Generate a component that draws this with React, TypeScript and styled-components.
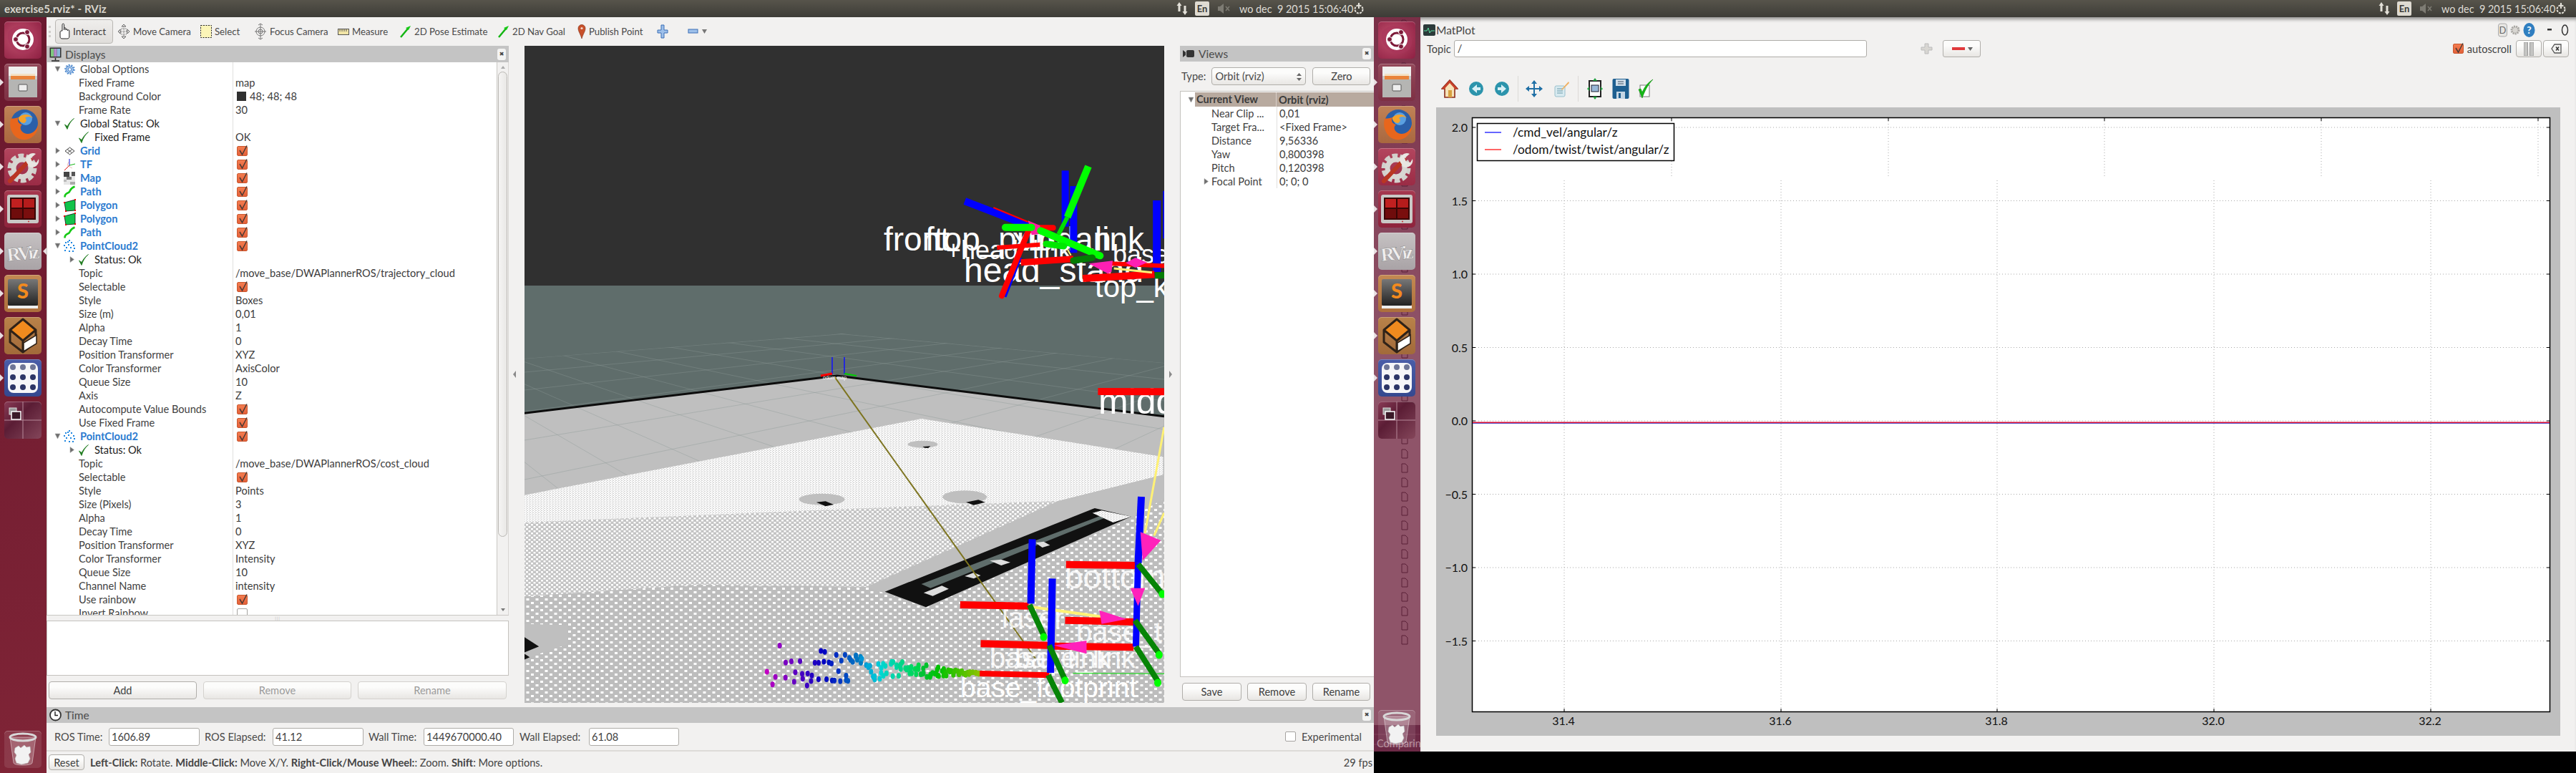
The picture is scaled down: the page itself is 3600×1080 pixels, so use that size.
import React from "react";
import styled, { createGlobalStyle } from "styled-components";

const FONT = `Lato, "Noto Sans", "Liberation Sans", sans-serif`;

const Global = createGlobalStyle`
  html, body { margin: 0; padding: 0; background: #000; }
  body { width: 3600px; height: 1080px; overflow: hidden; font-family: ${FONT}; font-size: 14.6px; color: #3c3c3c; }
  * { box-sizing: border-box; }
  svg { flex: none; }
`;

const Desktop = styled.div`display: flex; width: 3600px; height: 1080px; background: #000;`;
const Monitor = styled.div<{ $w: number; $h: number }>`
  width: ${p => p.$w}px; height: ${p => p.$h}px; display: flex; flex-direction: column; flex: none;
`;
const TopBar = styled.div`
  height: 24px; flex: none; display: flex; align-items: center; padding: 0 6px;
  background: linear-gradient(#57544b, #3d3c37);
`;
const WinTitle = styled.div`font-weight: 700; font-size: 15px; color: #d9d6cd; letter-spacing: .1px;`;
const Tray = styled.div`margin-left: auto; display: flex; align-items: center; height: 24px; color: #e0ddd5; padding-right: 6px;`;
const Clock = styled.div`width: 158px; margin-left: 13px; font-size: 14.4px; white-space: pre; color: #dfdcd4;`;
const EnBadge = styled.div`
  width: 20px; height: 20px; margin-left: 9px; background: #dfdbd2; color: #3c3b37; border-radius: 2px;
  font-size: 13px; font-weight: 700; text-align: center; line-height: 20px;
`;
const TrayIcon = styled.svg<{ $ml?: number }>`display: block; margin-left: ${p => p.$ml ?? 0}px;`;
const MonitorBody = styled.div`flex: 1; display: flex; min-height: 0;`;

const Launcher = styled.div<{ $dim?: boolean }>`
  position: relative; width: 65px; flex: none; padding: 6px 0 0 6px; overflow: hidden;
  background: ${p => p.$dim ? "linear-gradient(#7a2f47, #8f5469 45%, #8f5469)" : "linear-gradient(#6a182e, #7f2436)"};
  display: flex; flex-direction: column; gap: 7px;
`;
const Tile = styled.div<{ $bg: string }>`
  position: relative; z-index: 1; width: 52px; height: 52px; flex: none; border-radius: 5px; background: ${p => p.$bg};
  box-shadow: inset 0 1px 0 rgba(255,255,255,.25);
`;
const TileSvg = styled.svg`display: block;`;
const TrashSlot = styled.div<{ $b: number }>`position: absolute; z-index: 1; left: 6px; bottom: ${p => p.$b}px;`;
const Pip = styled.i`
  position: absolute; left: -6px; top: 21px; width: 0; height: 0;
  border: 5px solid transparent; border-left: 5px solid #e8dfe2; border-right: 0;
`;
const PipRight = styled.i`
  position: absolute; right: -7px; top: 21px; width: 0; height: 0;
  border: 5px solid transparent; border-right: 5px solid #e8dfe2; border-left: 0;
`;
const GhostTree = styled.div`position: absolute; left: 38px; top: 0; display: flex; flex-direction: column;`;
const GhostRow = styled.div`height: 20px; display: flex; align-items: center;`;
const GhostBand = styled.div`
  position: absolute; left: 0; right: 0; bottom: 0; height: 37px; background: repeating-linear-gradient(#6c2a46 0 12px, #76344f 12px 14px);
  color: #b48a9a; font-size: 14.5px; line-height: 52px; padding-left: 4px; white-space: nowrap;
`;

const Window = styled.div`flex: 1; min-width: 0; background: #f2f1f0; display: flex; flex-direction: column;`;
const Toolbar = styled.div`height: 40px; flex: none; display: flex; align-items: center; padding-left: 3px;`;
const Grip = styled.div`width: 9px; height: 16px; border-left: 3px dotted #cfcdc9; flex: none;`;
const ToolActive = styled.div<{ $w: number }>`
  width: ${p => p.$w}px; height: 34px; flex: none; display: flex; align-items: center; gap: 3px; padding-left: 4px;
  background: linear-gradient(#efeeec, #e0dedb); border: 1px solid #b9b7b3; border-radius: 4px; margin-right: 6px; font-size: 13.6px;
`;
const ToolItem = styled.div<{ $w: number; $ml?: number }>`
  width: ${p => p.$w}px; margin-left: ${p => p.$ml ?? 0}px; flex: none; display: flex; align-items: center; gap: 4px;
  white-space: nowrap; color: #4a4a4a; font-size: 13.2px; height: 34px;
`;

const MainRow = styled.div`height: 924px; flex: none; display: flex;`;
const DisplaysDock = styled.div`width: 646px; flex: none; display: flex; flex-direction: column;`;
const DockHeader = styled.div<{ $h: number }>`
  height: ${p => p.$h}px; flex: none; background: #c4c4c4; display: flex; align-items: center; gap: 5px; padding: 0 4px;
  font-size: 15.5px; color: #4b4b4b;
`;
const CloseBox = styled.div`
  margin-left: auto; width: 12px; height: 16px; background: #f4f4f3; border-radius: 3px;
  font-size: 8px; line-height: 16px; text-align: center; color: #444; font-family: "DejaVu Sans", sans-serif;
`;
const TreeFrame = styled.div`height: 773px; flex: none; display: flex; background: #fff; border-left: 1px solid #c9c7c3; border-bottom: 1px solid #c9c7c3; overflow: hidden;`;
const TreeBody = styled.div`flex: 1; min-width: 0; overflow: hidden; height: 772px;`;
const Row = styled.div`height: 19px; display: flex;`;
const NameCell = styled.div<{ $ind: number; $w: number }>`
  width: ${p => p.$w}px; flex: none; padding-left: ${p => p.$ind}px; display: flex; align-items: center;
  border-right: 1px solid #e1e0de; white-space: nowrap; overflow: hidden;
`;
const ValueCell = styled.div<{ $pad: number }>`
  flex: 1; padding-left: ${p => p.$pad}px; display: flex; align-items: center; gap: 5px; white-space: nowrap; color: #3c3c3c;
`;
const Expander = styled.span`width: 14px; flex: none; display: flex; align-items: center; justify-content: flex-start; padding-left: 2px;`;
const HeadExpander = styled(Expander)`width: 12px; margin-left: 8px;`;
const RowIcon = styled.span`width: 18px; margin-right: 6px; flex: none; display: flex; align-items: center; justify-content: center;`;
const Label = styled.span<{ $kind?: string }>`
  color: ${p => p.$kind === "link" ? "#2b7bd0" : p.$kind === "status" ? "#1c1c1c" : "#3f3f3f"};
  font-weight: ${p => p.$kind === "link" ? 700 : 400};
`;
const Swatch = styled.span`width: 13px; height: 13px; background: #303030; flex: none; margin-left: 2px;`;
const Check = styled.span<{ $off?: boolean }>`
  position: relative; display: block; width: 15px; height: 14px; margin-left: 2px; border-radius: 2px; flex: none;
  background: ${p => p.$off ? "#fff" : "linear-gradient(#f47c4f, #e4613a)"};
  border: 1px solid ${p => p.$off ? "#a5a3a0" : "#c9582f"};
`;
const CheckMark = styled.svg`position: absolute; left: 0; top: -3px;`;
const ScrollBar = styled.div`
  width: 17px; flex: none; position: relative; background: #f2f1f0; border-left: 1px solid #c9c7c3; border-right: 1px solid #d8d6d3;
`;
const ScrollThumb = styled.div`
  position: absolute; left: 1px; right: 1px; top: 13px; height: 650px; background: linear-gradient(90deg, #f5f4f3, #e9e8e6);
  border: 1px solid #b9b7b3; border-radius: 7px;
`;
const ScrollArrow = styled.i<{ $up?: boolean }>`
  position: absolute; left: 5px; ${p => p.$up ? "top: 5px; border-bottom: 4px solid #aaa;" : "bottom: 5px; border-top: 4px solid #777;"}
  border-left: 3px solid transparent; border-right: 3px solid transparent; width: 0; height: 0;
`;
const HSplit = styled.div`height: 7px; flex: none; display: flex; align-items: center; justify-content: center; color: #bbb; font-size: 6px; letter-spacing: 1px;`;
const DescBox = styled.div`height: 77px; flex: none; background: #fff; border: 1px solid #c4c2be;`;
const ButtonRow = styled.div<{ $gap: number; $pl: number }>`
  display: flex; gap: ${p => p.$gap}px; padding: 8px 0 0 ${p => p.$pl}px; flex: none;
`;
const Btn = styled.div<{ $w: number; $off?: boolean; $h?: number; $ml?: number }>`
  width: ${p => p.$w}px; height: ${p => p.$h ?? 25}px; flex: none; display: flex; align-items: center; justify-content: center;
  margin-left: ${p => p.$ml ?? 0}px;
  background: linear-gradient(#fcfcfb 30%, #e8e6e3); border: 1px solid ${p => p.$off ? "#d4d2ce" : "#b0aeaa"}; border-radius: 4px;
  color: ${p => p.$off ? "#9b9b9b" : "#3f3f3f"};
`;
const VSplit = styled.div<{ $left?: boolean }>`
  width: 22px; flex: none; display: flex; align-items: center; justify-content: ${p => p.$left ? "center" : "flex-start"};
  height: 918px; padding-left: ${p => p.$left ? 0 : 7}px; padding-right: ${p => p.$left ? 6 : 0}px;
`;
const SplitArrow = styled.i<{ $dir: string }>`
  width: 0; height: 0; border-top: 5px solid transparent; border-bottom: 5px solid transparent;
  ${p => p.$dir === "l" ? "border-right: 4px solid #8a8a8a;" : "border-left: 4px solid #8a8a8a;"}
`;
const Viewport = styled.svg`display: block; width: 894px; height: 918px; flex: none;`;
const ViewsDock = styled.div`width: 271px; flex: none; display: flex; flex-direction: column;`;
const TypeRow = styled.div`height: 41px; flex: none; display: flex; align-items: center; padding: 0 4px 0 2px; color: #4a4a4a;`;
const Combo = styled.div`
  width: 132px; height: 25px; margin-left: 8px; border: 1px solid #b0aeaa; border-radius: 4px; background: linear-gradient(#fcfcfb 30%, #e8e6e3);
  display: flex; align-items: center; padding-left: 4px; position: relative; flex: none; color: #4a4a4a;
`;
const ComboArrows = styled.svg`position: absolute; right: 5px; top: 6px;`;
const ViewsTree = styled.div`height: 819px; flex: none; background: #fff; border: 1px solid #c4c2be; border-right: 0; overflow: hidden; padding-top: 1px;`;
const ViewHead = styled.div`height: 20px; display: flex; align-items: center;`;
const HeadCells = styled.div`flex: 1; display: flex; height: 20px; background: #b8aa9f; align-items: center; font-weight: 700; color: #3a3a3a;`;
const HeadName = styled.div`width: 114px; padding-left: 2px; border-right: 1px solid #d8cfc8; height: 20px; line-height: 20px;`;
const HeadValue = styled.div`padding-left: 3px;`;

const TimeDock = styled.div`flex: none; height: 92px; display: flex; flex-direction: column;`;
const TimeRow = styled.div`height: 40px; flex: none; display: flex; align-items: center; padding-left: 11px; border-bottom: 2px solid #dddbd8;`;
const TimeLabel = styled.div<{ $w: number }>`width: ${p => p.$w}px; flex: none; color: #4a4a4a; white-space: nowrap;`;
const TimeInput = styled.div<{ $w?: number; $mr?: number }>`
  width: ${p => p.$w ?? 127}px; height: 25px; flex: none; margin-right: ${p => p.$mr ?? 7}px; background: #fff; border: 1px solid #aeaca8; border-radius: 3px;
  padding-left: 3px; line-height: 23px; color: #3f3f3f;
`;
const Experimental = styled.div`margin-left: auto; display: flex; align-items: center; gap: 8px; padding-right: 17px; color: #4a4a4a;`;
const StatusRow = styled.div`flex: 1; display: flex; align-items: center; padding-left: 3px; color: #444;`;
const StatusText = styled.div`margin-left: 8px; white-space: nowrap;`;
const Fps = styled.div`margin-left: auto; padding-right: 2px; color: #444;`;

/* Right monitor */
const PlotWindow = styled(Window)`box-shadow: inset 0 6px 5px -3px rgba(0,0,0,.4);`;
const PlotTitleRow = styled.div`height: 28px; margin-top: 4px; flex: none; display: flex; align-items: center; padding: 0 10px 0 4px; font-size: 15.5px; color: #444;`;
const TitleIcon = styled.svg`margin-right: 1px;`;
const WinControls = styled.div`margin-left: auto; display: flex; align-items: center; gap: 3px;`;
const MinimizeMark = styled.svg`margin-left: 4px;`;
const TopicRow = styled.div`height: 24px; flex: none; display: flex; align-items: center; padding: 0 8px 0 9px; color: #444;`;
const TopicInput = styled.div`
  width: 577px; height: 24px; margin-left: 4px; flex: none; background: #fff; border: 1px solid #aeaca8; border-radius: 3px; padding-left: 4px; line-height: 22px;
`;
const AddTopic = styled.svg`margin-left: 72px;`;
const DropBtn = styled.div`
  width: 53px; height: 24px; margin-left: 10px; flex: none; border: 1px solid #b0aeaa; border-radius: 3px; background: linear-gradient(#fcfcfb 30%, #e8e6e3);
  display: flex; align-items: center; gap: 4px; padding-left: 12px;
`;
const AutoLabel = styled.div`display: flex; align-items: center; gap: 5px; margin-left: auto; margin-right: 6px;`;
const SquareBtn = styled.div`
  width: 36px; height: 24px; flex: none; margin-right: 2px; display: flex; align-items: center; justify-content: center;
  border: 1px solid #b0aeaa; border-radius: 4px; background: linear-gradient(#fcfcfb 30%, #e8e6e3);
`;
const PlotTools = styled.div`height: 50px; margin-top: 19px; flex: none; padding-left: 26px; display: flex; align-items: center;`;
const PlotToolSlot = styled.div<{ $w: number; $ml?: number }>`width: ${p => p.$w}px; margin-left: ${p => p.$ml ?? 0}px; flex: none; display: flex; justify-content: center;`;
const ToolSep = styled.div<{ $ml: number }>`width: 1px; height: 36px; margin-left: ${p => p.$ml}px; background: #dcdad7; flex: none;`;
const FigureWrap = styled.div`padding-left: 22px; padding-top: 1px; flex: none;`;
const Figure = styled.svg`display: block; width: 1571px; height: 878px;`;

/* helpers */
const z5 = (x: number, y: number): [number, number] => [720 + x / 1.568, 500 + y / 3];
const z11 = (x: number, y: number): [number, number] => [1220 + x / 3, 220 + y / 3];
type Z = typeof z5;
const poly = (f: Z, pts: number[][]) => pts.map(p => f(p[0], p[1]).map(n => n.toFixed(1)).join(",")).join(" ");

const Bar = ({ f, a, c, w, cap }: { f: Z; a: number[]; c: string; w: number; cap?: "round" | "butt" }) => {
  const [x1, y1] = f(a[0], a[1]);
  const [x2, y2] = f(a[2], a[3]);
  return <line x1={x1} y1={y1} x2={x2} y2={y2} stroke={c} strokeWidth={w} strokeLinecap={cap ?? "butt"} />;
};

const Tri = ({ open }: { open?: boolean }) => open
  ? <svg width="9" height="9" viewBox="0 0 9 9"><path d="M1 1h7L4.500 8z" fill="#6e6e6e" stroke="#a8a8a8" strokeWidth=".6" /></svg>
  : <svg width="9" height="9" viewBox="0 0 9 9"><path d="M2 .5v8L7.500 4.500z" fill="#6e6e6e" stroke="#a8a8a8" strokeWidth=".6" /></svg>;

const CheckBox = ({ off }: { off?: boolean }) => (
  <Check $off={off}>
    {!off && <CheckMark width="15" height="17" viewBox="0 0 15 17"><path d="M3 8l3.500 6L13 1.500" fill="none" stroke="#4a3a34" strokeWidth="1.5" /></CheckMark>}
  </Check>
);

const GreenCheck = () => <svg width="16" height="18" viewBox="0 0 16 18"><path d="M1.500 10L5 16.500C7 10 10 5 14.500 1.500 9.500 5 7 9 5.200 12.500z" fill="#1d7a1d" stroke="#1d7a1d" strokeWidth=".8" /></svg>;

const DisplayIcon = ({ kind }: { kind: string }) => {
  switch (kind) {
    case "gear": return <svg width="15" height="16" viewBox="0 0 16 16"><circle cx="8" cy="8" r="5.500" fill="#a9c6ea" stroke="#3a7cc8" strokeWidth="1.500" strokeDasharray="2 1" /><circle cx="8" cy="8" r="2.500" fill="#fff" stroke="#3a7cc8" /><circle cx="8" cy="8" r="7" fill="none" stroke="#3a7cc8" strokeWidth="1.500" strokeDasharray="2 2.400" /></svg>;
    case "check": return <GreenCheck />;
    case "grid": return <svg width="15" height="12" viewBox="0 0 15 12"><path d="M7.500 1L14 6l-6.500 5L1 6zM4 3.500l6.500 5M11 3.500L4.500 8.500" fill="none" stroke="#444" strokeWidth="1" /></svg>;
    case "tf": return <svg width="17" height="18" viewBox="0 0 17 18"><path d="M8 10V1" stroke="#1616d8" strokeWidth="1" /><path d="M8 10l8-2" stroke="#14b414" strokeWidth="1" /><path d="M8 10l-7 7" stroke="#e01010" strokeWidth="1" /><path d="M7 5l-2 5 7 4" fill="none" stroke="#e8a8a8" strokeWidth=".8" /></svg>;
    case "map": return <svg width="16" height="18" viewBox="0 0 16 18"><rect width="16" height="18" fill="#e6e6e6" /><rect width="8" height="7" fill="#444" /><rect x="11" width="5" height="6" fill="#555" /><rect y="7" x="4" width="7" height="4" fill="#777" /><rect y="11" width="4" height="3" fill="#bbb" /><rect x="9" y="14" width="7" height="4" fill="#aaa" /></svg>;
    case "path": return <svg width="17" height="18" viewBox="0 0 17 18"><path d="M1.500 16.500c0-6 4-5 6-7s1-5 8-8" fill="none" stroke="#16c916" strokeWidth="2.600" /></svg>;
    case "poly": return <svg width="17" height="18" viewBox="0 0 17 18"><path d="M1 5l15-4 0 15-13 1z" fill="#12c34a" stroke="#111" strokeWidth=".8" /><rect x="0" y="4" width="2" height="2" fill="#e00" /><rect x="15" y="0" width="2" height="2" fill="#e00" /><rect x="15" y="15" width="2" height="2" fill="#e00" /><rect x="2" y="16" width="2" height="2" fill="#e00" /></svg>;
    case "cloud": return <svg width="16" height="18" viewBox="0 0 16 18" fill="#1f86e0">{[[7, 0], [2, 3], [10, 3], [0, 7], [6, 6], [13, 7], [3, 10], [9, 10], [14, 11], [1, 14], [7, 15], [12, 15], [5, 2]].map((p, i) => <rect key={i} x={p[0]} y={p[1]} width="2" height="2" />)}</svg>;
    default: return null;
  }
};

type Item = { n: string; v?: string; o?: boolean; e?: boolean; i?: string; k?: string; ck?: boolean; lvl?: number; sw?: boolean; off?: boolean };
const P = (n: string, v?: string): Item => ({ n, v });
const C = (n: string): Item => ({ n, ck: true });
const D = (n: string, i: string, o = false): Item => ({ n, i, e: true, o, k: "link", ck: true, lvl: 0 });
const pc1: Item[] = [
  P("Topic", "/move_base/DWAPlannerROS/trajectory_cloud"), C("Selectable"), P("Style", "Boxes"), P("Size (m)", "0,01"), P("Alpha", "1"),
  P("Decay Time", "0"), P("Position Transformer", "XYZ"), P("Color Transformer", "AxisColor"), P("Queue Size", "10"), P("Axis", "Z"),
  C("Autocompute Value Bounds"), C("Use Fixed Frame"),
];
const pc2: Item[] = [
  P("Topic", "/move_base/DWAPlannerROS/cost_cloud"), C("Selectable"), P("Style", "Points"), P("Size (Pixels)", "3"), P("Alpha", "1"),
  P("Decay Time", "0"), P("Position Transformer", "XYZ"), P("Color Transformer", "Intensity"), P("Queue Size", "10"), P("Channel Name", "intensity"),
  C("Use rainbow"), { n: "Invert Rainbow", ck: true, off: true },
];
const status: Item = { n: "Status: Ok", i: "check", e: true, k: "status", lvl: 1 };
const items: Item[] = [
  { n: "Global Options", i: "gear", e: true, o: true, lvl: 0 },
  P("Fixed Frame", "map"), { n: "Background Color", v: "48; 48; 48", sw: true }, P("Frame Rate", "30"),
  { n: "Global Status: Ok", i: "check", e: true, o: true, k: "status", lvl: 0 },
  { n: "Fixed Frame", v: "OK", i: "check", k: "status", lvl: 1 },
  D("Grid", "grid"), D("TF", "tf"), D("Map", "map"), D("Path", "path"), D("Polygon", "poly"), D("Polygon", "poly"), D("Path", "path"),
  D("PointCloud2", "cloud", true), status, ...pc1, D("PointCloud2", "cloud", true), status, ...pc2,
];

const DisplayRow = ({ it }: { it: Item }) => {
  const ind = it.lvl === 0 ? 8 : it.lvl === 1 ? 28 : 44;
  return (
    <Row>
      <NameCell $w={260} $ind={ind}>
        {it.lvl !== undefined && <Expander>{it.e && <Tri open={it.o} />}</Expander>}
        {it.i && <RowIcon><DisplayIcon kind={it.i} /></RowIcon>}
        <Label $kind={it.k}>{it.n}</Label>
      </NameCell>
      <ValueCell $pad={3}>
        {it.ck && <CheckBox off={it.off} />}
        {it.sw && <Swatch />}
        {it.v}
      </ValueCell>
    </Row>
  );
};

const viewRows: [string, string, boolean?][] = [
  ["Near Clip ...", "0,01"], ["Target Fra...", "<Fixed Frame>"], ["Distance", "9,56336"], ["Yaw", "0,800398"], ["Pitch", "0,120398"], ["Focal Point", "0; 0; 0", true],
];

/* Launcher tile art */
const tileBg: Record<string, string> = {
  ubuntu: "radial-gradient(circle at 40% 45%, #c4526f, #8d1f42)",
  files: "linear-gradient(#93495a, #7e3044)",
  firefox: "linear-gradient(#c08256, #a9683f)",
  settings: "linear-gradient(#b3455e, #9a2b45)",
  term: "linear-gradient(#a6384f, #8e233c)",
  rviz: "linear-gradient(#c6c2c3, #a9a3a6)",
  sublime: "linear-gradient(#c48a52, #ad6f3c)",
  box: "linear-gradient(#b98249, #a26a3a)",
  apps: "linear-gradient(#4a5da8, #34488f)",
  work: "linear-gradient(135deg, #8a3b56, #5b1d35 40%, #84465a)",
  trash: "rgba(255,255,255,.1)",
};

const TileArt = ({ kind }: { kind: string }) => {
  const S = (c: React.ReactNode) => <TileSvg width="52" height="52" viewBox="0 0 52 52">{c}</TileSvg>;
  switch (kind) {
    case "ubuntu": return S(<>
      <path d="M6 14C18 0 44 4 47 26 49 42 30 50 18 42 8 36 2 24 6 14z" fill="#a8355a" opacity=".6" />
      <circle cx="26" cy="25" r="15" fill="#fff" /><circle cx="26" cy="25" r="9" fill="none" stroke="#7d1a39" strokeWidth="3" />
      <circle cx="32" cy="15" r="3.500" fill="#7d1a39" stroke="#fff" /><circle cx="32" cy="35" r="3.500" fill="#7d1a39" stroke="#fff" /><circle cx="16" cy="25" r="3.500" fill="#7d1a39" stroke="#fff" />
    </>);
    case "files": return S(<>
      <rect x="6" y="4" width="40" height="43" rx="2" fill="#c9c9c7" /><rect x="6" y="4" width="40" height="13" fill="#efefed" />
      <rect x="9" y="14" width="34" height="8" fill="#e9843a" /><rect x="9" y="14" width="34" height="3" fill="#f4e1c4" />
      <rect x="6" y="22" width="40" height="25" fill="#b5b5b3" /><rect x="20" y="29" width="12" height="9" rx="1" fill="#eee" stroke="#555" />
    </>);
    case "firefox": return S(<>
      <circle cx="28" cy="24" r="19" fill="#2a5fa8" /><circle cx="30" cy="18" r="9" fill="#5aa0e0" />
      <path d="M9 18C5 34 16 49 30 47c10-1 18-11 17-20-3 10-12 14-19 11-6-3-7-9-3-12-6-1-7-6-5-10C14 18 11 17 9 18z" fill="#e8661c" />
      <path d="M20 16c6-6 16-5 20 1-5-3-9-2-11 0 3 2 2 5-1 7-5 0-9-4-8-8z" fill="#f4a22a" />
    </>);
    case "settings": return S(<>
      <circle cx="25" cy="28" r="16" fill="none" stroke="#d2d0cc" strokeWidth="9" strokeDasharray="7 3" />
      <circle cx="25" cy="28" r="12" fill="none" stroke="#d8d6d2" strokeWidth="7" />
      <path d="M8 46L36 16" stroke="#b93622" strokeWidth="6" strokeLinecap="round" />
      <path d="M30 18c0-8 8-13 14-10l-7 6 2 5 6 1 3-5c2 7-5 14-13 11z" fill="#e8e6e2" />
    </>);
    case "term": return S(<>
      <rect x="4" y="6" width="44" height="40" rx="3" fill="#c9c8c6" /><rect x="8" y="10" width="36" height="31" fill="#3a0505" />
      <rect x="10" y="12" width="15" height="12" fill="#c12020" /><rect x="27" y="12" width="15" height="12" fill="#b51c1c" />
      <rect x="10" y="26" width="15" height="13" fill="#6f0c0c" /><rect x="27" y="26" width="15" height="13" fill="#7a0e0e" />
      <circle cx="34" cy="43.500" r="1" fill="#c33" />
    </>);
    case "rviz": return S(<text x="3" y="38" fontFamily="Liberation Serif, serif" fontSize="27" fontWeight="700" fill="#f0eeee" transform="rotate(-6 26 26)" textLength="46" stroke="#777" strokeWidth=".4">RViz</text>);
    case "sublime": return S(<>
      <defs><linearGradient id="subl" x1="0" y1="0" x2="0" y2="1"><stop offset="0" stopColor="#777" /><stop offset="1" stopColor="#222" /></linearGradient></defs>
      <rect x="5" y="6" width="42" height="37" rx="2" fill="url(#subl)" />
      <rect x="5" y="43" width="42" height="4" fill="#eee" />
      <text x="26" y="33" textAnchor="middle" fontFamily="Lato, sans-serif" fontWeight="900" fontSize="29" fill="#f28a1e">S</text>
    </>);
    case "box": return S(<>
      <path d="M26 3L44 18 26 33 8 18z" fill="#f08a1e" /><path d="M26 3L44 18 26 33 8 18zM8 18v17l18 14 18-14V18M26 33v16" fill="none" stroke="#2f2218" strokeWidth="3" strokeLinejoin="round" />
      <path d="M27 36l18-11v12L27 48z" fill="#fff" stroke="#2f2218" strokeWidth="1.500" />
    </>);
    case "apps": return S(<>
      <rect x="5" y="5" width="42" height="42" rx="8" fill="#f6f6f8" />
      {[12, 26, 40].map(y => [12, 26, 40].map(x => <circle key={x + "-" + y} cx={x} cy={y - 1} r="4" fill={y === 12 ? "#6e7596" : "#2c3566"} />))}
    </>);
    case "work": return S(<>
      <path d="M0 26H52M26 0V52" stroke="#b78a9a" strokeWidth="1" />
      <rect x="7" y="9" width="10" height="9" fill="#999" stroke="#ddd" /><rect x="10" y="14" width="13" height="11" fill="#3a1a28" stroke="#fff" strokeWidth="1.500" />
    </>);
    case "trash": return S(<>
      <path d="M8 9l5 36c1 4 25 4 26 0l5-36z" fill="rgba(255,255,255,.22)" stroke="rgba(255,255,255,.45)" />
      <ellipse cx="26" cy="9" rx="18" ry="5" fill="none" stroke="#d8d8d8" strokeWidth="3" />
      <path d="M15 24l5-3 3 3 5-4 3 3 5-1 1 8-3 3 2 6-3 6-9 2-7-2-2-6 2-5-3-4z" fill="#f2f2f2" stroke="#bbb" strokeWidth=".6" />
    </>);
    default: return null;
  }
};

const tiles: [string, number][] = [["ubuntu", 0], ["files", 1], ["firefox", 1], ["settings", 1], ["term", 1], ["rviz", 2], ["sublime", 1], ["box", 1], ["apps", 1], ["work", 0]];

const LauncherBar = ({ dim, activeRviz }: { dim?: boolean; activeRviz?: boolean }) => (
  <Launcher $dim={dim}>
    {dim && (
      <GhostTree>
        {Array.from({ length: 44 }).map((_, i) => (
          <GhostRow key={i}>
            <svg width="10" height="14" viewBox="0 0 10 14"><path d="M1 1h5l3 3v9H1z" fill="none" stroke="#5a2038" strokeWidth="1" /></svg>
          </GhostRow>
        ))}
      </GhostTree>
    )}
    {tiles.map(([k, pip], i) => (
      <Tile key={i} $bg={tileBg[k]}>
        {pip > 0 && <Pip />}
        {pip === 2 && activeRviz && <PipRight />}
        <TileArt kind={k} />
      </Tile>
    ))}
    {dim && <GhostBand>Comparing</GhostBand>}
    <TrashSlot $b={dim ? 6 : 7}><Tile $bg={tileBg.trash}><TileArt kind="trash" /></Tile></TrashSlot>
  </Launcher>
);

const PanelTray = () => (
  <Tray>
    <TrayIcon width="18" height="20" viewBox="0 0 18 20"><path d="M5 1l3.500 5H6.500v8h-3V6H1.500zM13 19l-3.500-5h2V6h3v8h2z" fill="#e4e1d9" /></TrayIcon>
    <EnBadge>En</EnBadge>
    <TrayIcon $ml={11} width="18" height="16" viewBox="0 0 18 16"><path d="M1 5h3l5-4v14l-5-4H1z" fill="#7d7b73" /><path d="M12 5l5 6M17 5l-5 6" stroke="#7d7b73" strokeWidth="1.500" /></TrayIcon>
    <Clock>wo dec  9 2015 15:06:40</Clock>
    <TrayIcon width="18" height="20" viewBox="0 0 18 20"><circle cx="9" cy="11" r="5.500" fill="none" stroke="#e4e1d9" strokeWidth="2" strokeDasharray="3 1.300" /><path d="M9 2v8" stroke="#e4e1d9" strokeWidth="2" /></TrayIcon>
  </Tray>
);

/* Toolbar icons */
const Ic = {
  hand: <svg width="17" height="24" viewBox="0 0 17 24"><path d="M5 11V2.500a1.300 1.300 0 0 1 2.600 0V10V8a1.200 1.200 0 0 1 2.400 0v2a1.200 1.200 0 0 1 2.400 0v1a1.200 1.200 0 0 1 2.400 0v8c0 2-1 3-3 3H5c-2 0-3-1-3-3v-6c0-1.500 1-2 3-2z" fill="#fff" stroke="#222" strokeWidth="1" /></svg>,
  move: <svg width="18" height="22" viewBox="0 0 18 22"><g fill="none" stroke="#666" strokeWidth="1"><path d="M9 1l3 3H6zM9 21l3-3H6zM1 11l3-3v6zM17 11l-3-3v6z" /><rect x="5" y="7" width="8" height="8" strokeDasharray="1 1" /><path d="M9 4v14M4 11h10" strokeDasharray="1 1" /></g></svg>,
  select: <svg width="16" height="18" viewBox="0 0 16 18"><rect x=".5" y=".5" width="15" height="17" fill="#fbf5b8" stroke="#222" strokeDasharray="2 1.500" /></svg>,
  focus: <svg width="18" height="24" viewBox="0 0 18 24"><g fill="none" stroke="#777" strokeWidth="1"><circle cx="9" cy="12" r="6" /><circle cx="9" cy="12" r="3" /><path d="M9 1v22M1 12h16M6 3l3-2 3 2M6 21l3 2 3-2" /></g></svg>,
  ruler: <svg width="16" height="9" viewBox="0 0 16 9"><rect x=".5" y=".5" width="15" height="8" fill="#f1e4a6" stroke="#555" /><path d="M3 1v3M6 1v3M9 1v3M12 1v3" stroke="#555" /></svg>,
  arrow: <svg width="16" height="18" viewBox="0 0 16 18"><path d="M1 17L11 5" stroke="#13b513" strokeWidth="2.500" /><path d="M15 1l-7 3 4 3z" fill="#16c916" /></svg>,
  pin: <svg width="12" height="22" viewBox="0 0 12 22"><path d="M6 21C4 14 1 11 1 6.500a5 5 0 0 1 10 0C11 11 8 14 6 21z" fill="#c8502a" stroke="#7a2c14" strokeWidth=".6" /><circle cx="6" cy="6.500" r="1.600" fill="#f4d8cc" /></svg>,
  plus: <svg width="16" height="22" viewBox="0 0 16 22"><path d="M6 2h4v7h5v4h-5v7H6v-7H1V9h5z" fill="#9ec0ea" stroke="#3a6fb5" /></svg>,
  minus: <svg width="16" height="8" viewBox="0 0 16 8"><rect x="1" y="1" width="13" height="5" fill="#9ec0ea" stroke="#3a6fb5" /></svg>,
  down: <svg width="8" height="7" viewBox="0 0 8 7"><path d="M0 0h7L3.500 6z" fill="#777" /></svg>,
};

const Tools: [React.ReactNode, string, number, number][] = [
  [Ic.move, "Move Camera", 94, 0], [Ic.select, "Select", 53, 22], [Ic.focus, "Focus Camera", 96, 22], [Ic.ruler, "Measure", 67, 21],
  [Ic.arrow, "2D Pose Estimate", 116, 20], [Ic.arrow, "2D Nav Goal", 88, 21], [Ic.pin, "Publish Point", 89, 23],
];

/* 3D scene */
const rnd = (i: number) => { const v = Math.sin(i * 127.1 + 11.7) * 43758.5453; return v - Math.floor(v); };
const dotPts: { x: number; y: number; h: number }[] = [];
for (let i = 0; i < 135; i++) {
  const u = Math.pow(i / 134, .7);
  const x = 545 + u * 475;
  const t = 1190 + (x - 545) * .28;
  const b = 1385 - (x - 545) * .13;
  const band = rnd(i) < .55 ? rnd(i + 500) * .45 : .6 + rnd(i + 900) * .4;
  dotPts.push({ x: x + rnd(i + 300) * 8, y: t + (b - t) * band, h: 300 - u * 225 });
}

const farVPR = [2050, 399], farVPL = [420, 399];
const gridL = [501, 520, 545, 575, 615, 670, 750, 860, 1010, 1250];
const gridR = [507, 530, 560, 600, 650, 720, 810, 930, 1100, 1350];

const Scene = () => (
  <Viewport viewBox="733 64 894 918">
    <defs>
      <pattern id="dNear" width="13" height="10" patternUnits="userSpaceOnUse">
        <rect width="13" height="10" fill="#bdbdbd" />
        <rect x="1" y="1" width="4" height="3" fill="#fff" /><rect x="7.500" y="6" width="4" height="3" fill="#fff" />
      </pattern>
      <pattern id="dMid" width="7" height="6" patternUnits="userSpaceOnUse">
        <rect width="7" height="6" fill="#c4c4c4" />
        <rect x="0" y="0" width="3" height="2.500" fill="#fff" /><rect x="3.500" y="3" width="3" height="2.500" fill="#fff" />
      </pattern>
      <pattern id="dFar" width="4" height="3" patternUnits="userSpaceOnUse">
        <rect width="4" height="3" fill="#d4d4d4" />
        <rect x="0" y="0" width="3" height="1.600" fill="#fff" /><rect x="2" y="1.500" width="2" height="1.500" fill="#fff" />
      </pattern>
      <clipPath id="gridClip"><polygon points="733,501 1176,466 1627,507 1627,982 733,982" /></clipPath>
    </defs>
    <rect x="733" y="64" width="894" height="336" fill="#303030" />
    <rect x="733" y="399" width="894" height="583" fill="#5f6d6b" />
    <polygon points={poly(z5, [[705, 75], [20, 232], [20, 1445], [1422, 1445], [1422, 245]])} fill="#bfbfbf" />
    <g clipPath="url(#gridClip)">
      {gridL.map(y => <line key={y} x1={733} y1={y} x2={farVPR[0]} y2={farVPR[1]} stroke="#8d9997" strokeOpacity=".4" strokeWidth="1" />)}
      {gridR.map(y => <line key={y} x1={1627} y1={y} x2={farVPL[0]} y2={farVPL[1]} stroke="#8d9997" strokeOpacity=".4" strokeWidth="1" />)}
    </g>
    <polyline points={poly(z5, [[20, 232], [705, 75], [1422, 245]])} fill="none" stroke="#0c0c0c" strokeWidth="3" />

    <polygon points={poly(z5, [[20, 1000], [400, 950], [770, 960], [900, 1045], [1422, 590], [1422, 1445], [20, 1445]])} fill="url(#dNear)" />
    <polygon points={poly(z5, [[20, 690], [900, 620], [1190, 600], [770, 960], [400, 950], [20, 1000]])} fill="url(#dMid)" />
    <polygon points={poly(z5, [[890, 255], [1420, 415], [1420, 490], [1190, 600], [900, 620], [20, 690], [20, 575]])} fill="url(#dFar)" />
    <polygon points={poly(z5, [[770, 960], [1190, 600], [1422, 490], [1422, 590], [1330, 690], [900, 1045]])} fill="#bfbfbf" />
    <polygon points={poly(z5, [[20, 1115], [115, 1120], [115, 1200], [20, 1262]])} fill="#bfbfbf" />
    <polygon points={poly(z5, [[20, 1170], [52, 1210], [20, 1235]])} fill="#111" />
    <polygon points={poly(z5, [[20, 1240], [32, 1255], [20, 1265]])} fill="#111" />

    <ellipse cx={z5(893, 0)[0]} cy={z5(0, 362)[1]} rx="21" ry="5" fill="#bfbfbf" />
    <polygon points={poly(z5, [[893, 372], [910, 370], [905, 378], [897, 377]])} fill="#111" />
    <ellipse cx={z5(672, 0)[0]} cy={z5(0, 593)[1]} rx="32" ry="8" fill="#bfbfbf" />
    <polygon points={poly(z5, [[660, 605], [680, 601], [698, 615], [680, 622]])} fill="#111" />
    <ellipse cx={z5(985, 0)[0]} cy={z5(0, 583)[1]} rx="31" ry="9" fill="#bfbfbf" />
    <polygon points={poly(z5, [[988, 605], [1015, 595], [1030, 605], [1005, 617]])} fill="#111" />

    <polygon points={poly(z5, [[810, 980], [1270, 630], [1350, 665], [900, 1045]])} fill="#111" />
    <polygon points={poly(z5, [[890, 948], [1285, 660], [1295, 668], [910, 965]])} fill="#5f6d6b" />
    <polygon points={poly(z5, [[895, 985], [935, 955], [950, 968], [915, 998]])} fill="#ddd" />
    <polygon points={poly(z5, [[985, 915], [1005, 900], [1020, 912], [1005, 925]])} fill="#ddd" />
    <polygon points={poly(z5, [[1040, 850], [1065, 845], [1085, 857], [1065, 870]])} fill="#ddd" />
    <polygon points={poly(z5, [[1140, 775], [1158, 770], [1172, 785], [1155, 795]])} fill="#ddd" />
    <polygon points={poly(z5, [[1265, 650], [1285, 640], [1350, 665], [1310, 690]])} fill="url(#dFar)" />

    <Bar f={z5} a={[700, 80, 1140, 1260]} c="#7d7420" w={2} />

    {dotPts.map((d, i) => {
      const [x, y] = z5(d.x, d.y);
      return <ellipse key={i} cx={x} cy={y} rx="3" ry="4" fill={`hsl(${d.h},100%,${d.h > 140 && d.h < 200 ? 42 : 38}%)`} />;
    })}

    <g fontFamily="Liberation Sans, sans-serif" fill="#fff">
      <text x="1235" y="350" fontSize="46">front</text>
      <text x="1293" y="350" fontSize="46">ftop_pub</text>
      <text x="1415" y="350" fontSize="46">xtridan</text>
      <text x="1530" y="350" fontSize="46">link</text>
      <text x="1322" y="362" fontSize="36">+head_link</text>
      <text x="1347" y="394" fontSize="48">head_stand</text>
      <text x="1530" y="415" fontSize="42">top_k</text>
      <text x="1555" y="368" fontSize="36">base</text>
      <text x="1535" y="578" fontSize="50">middle</text>
      <g fillOpacity=".85">
        <text x="1488" y="822" fontSize="46">bottom</text>
        <text x="1504" y="897" fontSize="40">base_t</text>
        <text x="1400" y="877" fontSize="40">laser</text>
        <text x="1383" y="933" fontSize="40">base_link</text>
        <text x="1418" y="933" fontSize="40">base_link</text>
      </g>
      <text x="1342" y="974" fontSize="39">base_footprint</text>
      <text x="1150" y="530" fontSize="7">odom map</text>
    </g>

    {/* origin axes */}
    <line x1="1163" y1="499" x2="1163" y2="523" stroke="#1010ff" strokeWidth="1.500" />
    <line x1="1180" y1="499" x2="1180" y2="523" stroke="#1010ff" strokeWidth="1.500" />
    <line x1="1147" y1="525" x2="1163" y2="522" stroke="#f00" strokeWidth="3" />
    <line x1="1180" y1="522" x2="1197" y2="525" stroke="#0c0" strokeWidth="2" />

    {/* top cluster */}
    <Bar f={z11} a={[385, 183, 650, 285]} c="#0000ff" w={10} />
    <Bar f={z11} a={[806, 55, 806, 290]} c="#0000ff" w={10} />
    <Bar f={z11} a={[841, 120, 841, 400]} c="#0000ff" w={10} />
    <Bar f={z11} a={[1190, 180, 1190, 480]} c="#0000ff" w={11} />
    <Bar f={z11} a={[1225, 140, 1225, 340]} c="#0000ff" w={6} />
    <Bar f={z11} a={[620, 420, 555, 585]} c="#0000ff" w={3} />
    <Bar f={z11} a={[505, 210, 650, 270]} c="#ff0000" w={2} />
    <Bar f={z11} a={[655, 300, 540, 580]} c="#ff0000" w={8} cap="round" />
    <Bar f={z11} a={[640, 295, 755, 295]} c="#ff0000" w={8} cap="round" />
    <Bar f={z11} a={[520, 378, 700, 365]} c="#ff0000" w={6} />
    <Bar f={z11} a={[620, 440, 840, 425]} c="#ff0000" w={9} />
    <Bar f={z11} a={[880, 507, 1180, 490]} c="#ff0000" w={10} />
    <Bar f={z11} a={[1000, 445, 1230, 455]} c="#ff0000" w={6} />
    <polygon points={poly(z11, [[650, 265], [700, 285], [705, 320], [665, 325]])} fill="#ff1fa0" />
    <polygon points={poly(z11, [[905, 445], [1005, 433], [1000, 480], [985, 487]])} fill="#ff1fb4" />
    <polygon points={poly(z11, [[1060, 442], [1100, 420], [1150, 440], [1100, 462]])} fill="#ff1fb4" />
    <Bar f={z11} a={[1010, 465, 1170, 482]} c="#fff176" w={3} />
    <Bar f={z11} a={[815, 385, 830, 410]} c="#fff176" w={2} />
    <Bar f={z11} a={[903, 37, 815, 250]} c="#00ff00" w={10} />
    <Bar f={z11} a={[815, 250, 778, 322]} c="#00e000" w={6} />
    <Bar f={z11} a={[555, 293, 665, 293]} c="#00ff00" w={10} cap="round" />
    <Bar f={z11} a={[703, 307, 952, 412]} c="#00ff00" w={10} cap="round" />
    <Bar f={z11} a={[726, 362, 800, 372]} c="#00e800" w={9} cap="round" />
    <Bar f={z11} a={[840, 432, 920, 420]} c="#047c04" w={9} cap="round" />
    <Bar f={z11} a={[1182, 495, 1228, 493]} c="#047c04" w={9} />

    {/* lower cluster */}
    <Bar f={z5} a={[1422, 290, 1380, 735]} c="#fff176" w={3} />
    <Bar f={z5} a={[1422, 650, 1400, 745]} c="#fff176" w={3} />
    <Bar f={z5} a={[1135, 1045, 1285, 1085]} c="#fff176" w={4} />
    <Bar f={z5} a={[1277, 141, 1422, 142]} c="#ff0000" w={10} />
    <Bar f={z5} a={[975, 1035, 1125, 1040]} c="#ff0000" w={10} />
    <Bar f={z5} a={[1207, 866, 1362, 870]} c="#ff0000" w={10} />
    <Bar f={z5} a={[1205, 1100, 1355, 1107]} c="#ff0000" w={10} />
    <Bar f={z5} a={[1020, 1198, 1168, 1205]} c="#ff0000" w={10} />
    <Bar f={z5} a={[1180, 1208, 1355, 1213]} c="#ff0000" w={10} />
    <Bar f={z5} a={[1018, 1323, 1170, 1330]} c="#ff0000" w={8} />
    <Bar f={z5} a={[1133, 760, 1130, 1030]} c="#0000ff" w={10} />
    <Bar f={z5} a={[1372, 582, 1365, 860]} c="#0000ff" w={10} />
    <Bar f={z5} a={[1177, 925, 1173, 1320]} c="#0000ff" w={10} />
    <Bar f={z5} a={[1365, 860, 1360, 1210]} c="#0000ff" w={9} />
    <polygon points={poly(z5, [[1370, 730], [1415, 765], [1375, 850]])} fill="#ff22bb" />
    <polygon points={poly(z5, [[1348, 965], [1380, 965], [1365, 1040]])} fill="#ff22bb" />
    <polygon points={poly(z5, [[1280, 1058], [1340, 1095], [1285, 1115]])} fill="#ff22bb" />
    <polygon points={poly(z5, [[1180, 1205], [1252, 1185], [1252, 1240]])} fill="#ff22bb" />
    <line x1={z5(1222, 0)[0]} y1={z5(0, 1322)[1]} x2={1627} y2={z5(0, 1324)[1]} stroke="#00e000" strokeWidth="1" />
    <Bar f={z5} a={[1127, 1035, 1160, 1170]} c="#078407" w={8} />
    <Bar f={z5} a={[1365, 865, 1418, 990]} c="#078407" w={8} />
    <Bar f={z5} a={[1358, 1100, 1413, 1245]} c="#078407" w={8} />
    <Bar f={z5} a={[1360, 1210, 1410, 1360]} c="#078407" w={8} />
    <Bar f={z5} a={[1170, 1205, 1205, 1350]} c="#078407" w={8} />
    <Bar f={z5} a={[1168, 1330, 1198, 1445]} c="#078407" w={8} />
    {[[1158, 1170], [1418, 990], [1411, 1245], [1408, 1362], [1205, 1352]].map((p, i) => {
      const [x, y] = z5(p[0], p[1]);
      return <ellipse key={i} cx={x} cy={y} rx="5" ry="5.500" fill="#00ff00" />;
    })}
  </Viewport>
);

/* Plot */
const yTicks = ["2.0", "1.5", "1.0", "0.5", "0.0", "\u22120.5", "\u22121.0", "\u22121.5"];
const yPos = (i: number) => 178 + 102.5 * i;
const topX = [2336, 2639, 2941, 3244, 3547];
const lowX = [2186, 2489, 2791, 3094, 3397];
const xLabels = ["31.4", "31.6", "31.8", "32.0", "32.2"];
const GRID = { stroke: "#a8a8a8", strokeDasharray: "1 3" };

const PlotFigure = () => (
  <Figure viewBox="2007 150 1571 878">
    <rect x="2007" y="150" width="1571" height="878" fill="#bfbfbf" />
    <rect x="2057.500" y="164.500" width="1506" height="830" fill="#fff" stroke="#000" strokeWidth="1.500" />
    {yTicks.map((_, i) => <line key={i} x1="2058" x2="3563" y1={yPos(i)} y2={yPos(i)} {...GRID} />)}
    {topX.map(x => <line key={x} x1={x} x2={x} y1="165" y2="249" {...GRID} />)}
    {lowX.map(x => <line key={x} x1={x} x2={x} y1="252" y2="994" {...GRID} />)}
    {topX.map(x => <line key={x} x1={x} x2={x} y1="165" y2="169" stroke="#000" />)}
    {lowX.map(x => <line key={x} x1={x} x2={x} y1="990" y2="995" stroke="#000" />)}
    {yTicks.map((_, i) => <g key={i} stroke="#000"><line x1="2058" x2="2062" y1={yPos(i)} y2={yPos(i)} /><line x1="3559" x2="3563" y1={yPos(i)} y2={yPos(i)} /></g>)}
    <line x1="2058" x2="3563" y1="591.300" y2="591.300" stroke="#3030c0" strokeWidth="1" />
    <line x1="2058" x2="3563" y1="590.300" y2="590.300" stroke="#dd1133" strokeWidth="1.500" />
    <g fontFamily={FONT} fontSize="16" fill="#111">
      {yTicks.map((t, i) => <text key={i} x="2051" y={yPos(i) + 6} textAnchor="end">{t}</text>)}
      {xLabels.map((t, i) => <text key={t} x={lowX[i] - 1} y="1013" textAnchor="middle">{t}</text>)}
    </g>
    <rect x="2064.500" y="172.500" width="275" height="52" fill="#fff" stroke="#000" strokeWidth="1.500" />
    <line x1="2075" x2="2098" y1="185" y2="185" stroke="#0000ff" strokeWidth="1.200" />
    <line x1="2075" x2="2098" y1="209" y2="209" stroke="#ff0000" strokeWidth="1.200" />
    <g fontFamily={FONT} fontSize="17.300" fill="#111">
      <text x="2114" y="191">/cmd_vel/angular/z</text>
      <text x="2114" y="215">/odom/twist/twist/angular/z</text>
    </g>
  </Figure>
);

const PIc = {
  home: <svg width="24" height="26" viewBox="0 0 24 26"><path d="M12 1L1 13h4v12h14V13h4z" fill="#f6e2b8" stroke="#8a2a1a" strokeWidth="1.600" /><path d="M12 1L1 13l3 1 8-9 8 9 3-1z" fill="#c8402a" /><rect x="10" y="15" width="5" height="10" fill="#d8a040" /></svg>,
  back: <svg width="22" height="24" viewBox="0 0 22 24"><circle cx="11" cy="12" r="10" fill="#2c94ac" /><path d="M5 12l7-6v4h5v4h-5v4z" fill="#d8f0f6" /></svg>,
  fwd: <svg width="22" height="24" viewBox="0 0 22 24"><circle cx="11" cy="12" r="10" fill="#2c94ac" /><path d="M17 12l-7-6v4H5v4h5v4z" fill="#d8f0f6" /></svg>,
  move: <svg width="24" height="24" viewBox="0 0 24 24"><path d="M12 1v22M1 12h22" stroke="#1f6fa5" strokeWidth="2" /><path d="M12 0l4 5H8zM12 24l4-5H8zM0 12l5-4v8zM24 12l-5-4v8z" fill="#1f6fa5" /></svg>,
  edit: <svg width="24" height="24" viewBox="0 0 24 24"><rect x="3" y="8" width="14" height="15" rx="2" fill="#d8eaf0" stroke="#9ac0cc" /><path d="M6 12h8M6 15h8M6 18h8" stroke="#6a9aaa" /><path d="M12 13L22 2l1 2-10 10z" fill="#f0b060" /></svg>,
  fit: <svg width="22" height="30" viewBox="0 0 22 30"><rect x="3" y="4" width="16" height="22" fill="#fff" stroke="#222" strokeWidth="2" /><rect x="6" y="10" width="10" height="9" fill="#9ab8d8" stroke="#223" /><path d="M11 0l3 4H8zM11 30l3-4H8zM0 15l3-3v6zM22 15l-3-3v6z" fill="#22a040" /></svg>,
  save: <svg width="24" height="30" viewBox="0 0 24 30"><rect x=".5" y="1" width="23" height="28" rx="2" fill="#1e5f90" /><rect x="5" y="2" width="14" height="9" fill="#cfdeea" /><path d="M8 5h8M8 8h8" stroke="#456" /><rect x="6" y="19" width="12" height="10" fill="#c5d6e4" /><rect x="9" y="21" width="3" height="7" fill="#1e5f90" /></svg>,
  ok: <svg width="22" height="30" viewBox="0 0 22 30"><rect x="3" y="10" width="13" height="16" fill="#fff" stroke="#777" /><path d="M1 16l5 12C9 19 14 9 21 2 13 7 9 13 6 20l-2-5z" fill="#14b814" stroke="#0a8a0a" strokeWidth=".6" /></svg>,
};

export default function App() {
  return (
    <>
      <Global />
      <Desktop>
        <Monitor $w={1920} $h={1080}>
          <TopBar><WinTitle>exercise5.rviz* - RViz</WinTitle><PanelTray /></TopBar>
          <MonitorBody>
            <LauncherBar activeRviz />
            <Window>
              <Toolbar>
                <Grip />
                <ToolActive $w={81}>{Ic.hand}<span>Interact</span></ToolActive>
                {Tools.map(([ic, t, w, ml]) => <ToolItem key={t} $w={w} $ml={ml}>{ic}{t}</ToolItem>)}
                <ToolItem $w={16} $ml={22}>{Ic.plus}</ToolItem>
                <ToolItem $w={26} $ml={27}>{Ic.minus}{Ic.down}</ToolItem>
              </Toolbar>
              <MainRow>
                <DisplaysDock>
                  <DockHeader $h={23}>
                    <svg width="17" height="20" viewBox="0 0 17 20"><rect x=".5" y=".5" width="16" height="14" fill="#333" /><rect x="2" y="2" width="4.300" height="11" fill="#7fc97f" /><rect x="6.300" y="2" width="4.300" height="11" fill="#b48ac9" /><rect x="10.600" y="2" width="4.400" height="11" fill="#8ab4d9" /><path d="M8.500 15v3M3 19h11" stroke="#222" strokeWidth="1.500" /></svg>
                    Displays<CloseBox>✖</CloseBox>
                  </DockHeader>
                  <TreeFrame>
                    <TreeBody>{items.map((it, i) => <DisplayRow key={i} it={it} />)}</TreeBody>
                    <ScrollBar><ScrollArrow $up /><ScrollThumb /><ScrollArrow /></ScrollBar>
                  </TreeFrame>
                  <HSplit>|||</HSplit>
                  <DescBox />
                  <ButtonRow $gap={9} $pl={3}>
                    <Btn $w={207}>Add</Btn><Btn $w={207} $off>Remove</Btn><Btn $w={208} $off>Rename</Btn>
                  </ButtonRow>
                </DisplaysDock>
                <VSplit $left><SplitArrow $dir="l" /></VSplit>
                <Scene />
                <VSplit><SplitArrow $dir="r" /></VSplit>
                <ViewsDock>
                  <DockHeader $h={22}>
                    <svg width="17" height="12" viewBox="0 0 17 12"><path d="M0 1l4 3v4l-4 3z" fill="#333" /><rect x="5" y="1" width="11" height="10" rx="2" fill="#333" /></svg>
                    Views<CloseBox>✖</CloseBox>
                  </DockHeader>
                  <TypeRow>Type:<Combo>Orbit (rviz)<ComboArrows width="7" height="13" viewBox="0 0 7 13"><path d="M0 5l3.500-4L7 5zM0 8l3.500 4L7 8z" fill="#666" /></ComboArrows></Combo><Btn $w={81} $ml={9}>Zero</Btn></TypeRow>
                  <ViewsTree>
                    <ViewHead>
                      <HeadExpander><Tri open /></HeadExpander>
                      <HeadCells><HeadName>Current View</HeadName><HeadValue>Orbit (rviz)</HeadValue></HeadCells>
                    </ViewHead>
                    {viewRows.map(([n, v, e]) => (
                      <Row key={n}>
                        <NameCell $w={135} $ind={29}>
                          <Expander>{e && <Tri />}</Expander><Label>{n}</Label>
                        </NameCell>
                        <ValueCell $pad={3}>{v}</ValueCell>
                      </Row>
                    ))}
                  </ViewsTree>
                  <ButtonRow $gap={8} $pl={3}>
                    <Btn $w={83}>Save</Btn><Btn $w={83}>Remove</Btn><Btn $w={81}>Rename</Btn>
                  </ButtonRow>
                </ViewsDock>
              </MainRow>
              <TimeDock>
                <DockHeader $h={22}>
                  <svg width="17" height="18" viewBox="0 0 17 18"><circle cx="8.500" cy="9" r="7.500" fill="#fff" stroke="#333" strokeWidth="1.800" /><path d="M8 4v5.500h4" fill="none" stroke="#222" strokeWidth="1.400" /></svg>
                  Time<CloseBox>✖</CloseBox>
                </DockHeader>
                <TimeRow>
                  <TimeLabel $w={76}>ROS Time:</TimeLabel><TimeInput>1606.89</TimeInput>
                  <TimeLabel $w={95}>ROS Elapsed:</TimeLabel><TimeInput>41.12</TimeInput>
                  <TimeLabel $w={77}>Wall Time:</TimeLabel><TimeInput $w={126} $mr={8}>1449670000.40</TimeInput>
                  <TimeLabel $w={97}>Wall Elapsed:</TimeLabel><TimeInput $w={126}>61.08</TimeInput>
                  <Experimental><CheckBox off />Experimental</Experimental>
                </TimeRow>
                <StatusRow>
                  <Btn $w={50} $h={22}>Reset</Btn>
                  <StatusText><b>Left-Click:</b> Rotate. <b>Middle-Click:</b> Move X/Y. <b>Right-Click/Mouse Wheel:</b>: Zoom. <b>Shift</b>: More options.</StatusText>
                  <Fps>29 fps</Fps>
                </StatusRow>
              </TimeDock>
            </Window>
          </MonitorBody>
        </Monitor>
        <Monitor $w={1680} $h={1050}>
          <TopBar><PanelTray /></TopBar>
          <MonitorBody>
            <LauncherBar dim />
            <PlotWindow>
              <PlotTitleRow>
                <TitleIcon width="17" height="16" viewBox="0 0 17 16"><rect width="17" height="16" rx="2" fill="#2b3a3a" /><path d="M1 9h4l2-4 2 7 2-3h5" fill="none" stroke="#5de0a0" strokeWidth="1" /></TitleIcon>
                MatPlot
                <WinControls>
                  <svg width="13" height="20" viewBox="0 0 13 20"><rect x=".5" y="1" width="12" height="18" rx="3" fill="#e8e6e3" stroke="#aaa" /><text x="6.500" y="15" textAnchor="middle" fontSize="13" fill="#666" fontFamily="Lato, sans-serif">D</text></svg>
                  <svg width="16" height="20" viewBox="0 0 16 20"><circle cx="8" cy="10" r="5" fill="#d8d6d2" stroke="#a8a6a2" strokeWidth="3" strokeDasharray="2 1" /></svg>
                  <svg width="17" height="22" viewBox="0 0 17 22"><ellipse cx="8.500" cy="11" rx="8" ry="10" fill="#2f7ec0" /><text x="8.500" y="16" textAnchor="middle" fontSize="14" fontWeight="700" fill="#fff" fontFamily="Lato, sans-serif">?</text></svg>
                  <MinimizeMark width="26" height="6" viewBox="0 0 26 6"><rect x="10" y="1" width="6" height="2.500" fill="#333" /></MinimizeMark>
                  <svg width="11" height="16" viewBox="0 0 11 16"><ellipse cx="5.500" cy="8" rx="4" ry="7" fill="none" stroke="#333" strokeWidth="1.500" /></svg>
                </WinControls>
              </PlotTitleRow>
              <TopicRow>
                Topic<TopicInput>/</TopicInput>
                <AddTopic width="24" height="22" viewBox="0 0 24 22"><path d="M9 4h5v5h5v4h-5v5H9v-5H4V9h5z" fill="#d8d6d2" stroke="#bbb" /></AddTopic>
                <DropBtn><svg width="18" height="5" viewBox="0 0 18 5"><rect width="18" height="4" fill="#e0393b" /></svg><svg width="7" height="5" viewBox="0 0 7 5"><path d="M0 0h7L3.500 5z" fill="#666" /></svg></DropBtn>
                <AutoLabel><CheckBox />autoscroll</AutoLabel>
                <SquareBtn><svg width="14" height="19" viewBox="0 0 14 19"><rect width="5.500" height="19" fill="#c4c4c2" stroke="#999" /><rect x="8.500" width="5.500" height="19" fill="#c4c4c2" stroke="#999" /></svg></SquareBtn>
                <SquareBtn><svg width="15" height="14" viewBox="0 0 15 14"><path d="M5 1h9v12H5L1 7z" fill="#f2f2f0" stroke="#555" strokeWidth="1.300" /><path d="M7 4.500l4 5M11 4.500l-4 5" stroke="#333" strokeWidth="1.500" /></svg></SquareBtn>
              </TopicRow>
              <PlotTools>
                <PlotToolSlot $w={30}>{PIc.home}</PlotToolSlot>
                <PlotToolSlot $w={36} $ml={4}>{PIc.back}</PlotToolSlot>
                <PlotToolSlot $w={36}>{PIc.fwd}</PlotToolSlot>
                <ToolSep $ml={4} />
                <PlotToolSlot $w={44}>{PIc.move}</PlotToolSlot>
                <PlotToolSlot $w={32}>{PIc.edit}</PlotToolSlot>
                <ToolSep $ml={7} />
                <PlotToolSlot $w={46}>{PIc.fit}</PlotToolSlot>
                <PlotToolSlot $w={26}>{PIc.save}</PlotToolSlot>
                <PlotToolSlot $w={44}>{PIc.ok}</PlotToolSlot>
              </PlotTools>
              <FigureWrap><PlotFigure /></FigureWrap>
            </PlotWindow>
          </MonitorBody>
        </Monitor>
      </Desktop>
    </>
  );
}
